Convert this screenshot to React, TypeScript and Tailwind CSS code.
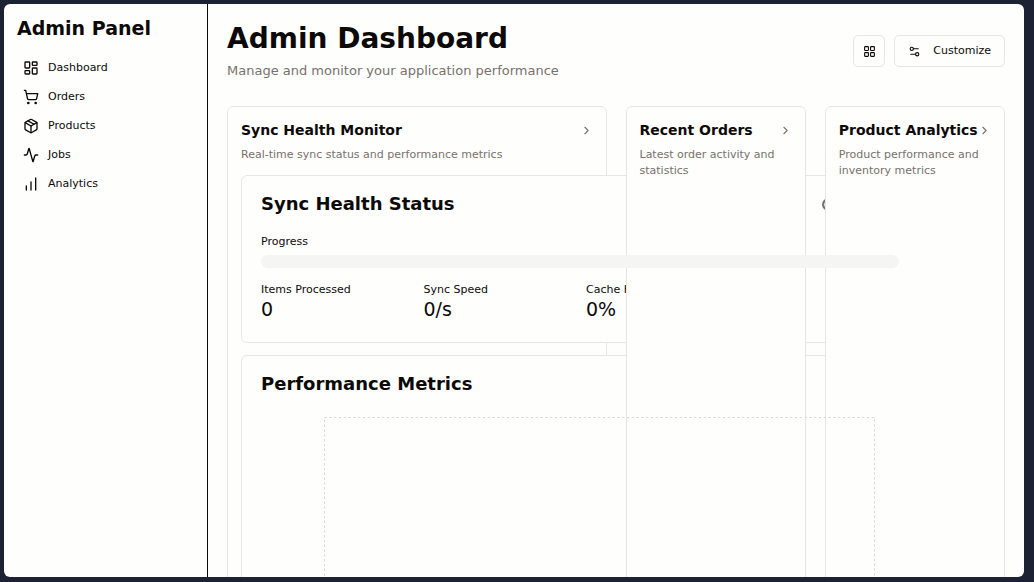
import {
  Activity,
  BarChart,
  ChevronRight,
  Clock,
  LayoutDashboard,
  LayoutGrid,
  Package,
  Settings2,
  ShoppingCart,
} from "lucide-react";
import type { LucideIcon } from "lucide-react";
import type { ReactNode } from "react";

const navItems: { label: string; icon: LucideIcon }[] = [
  { label: "Dashboard", icon: LayoutDashboard },
  { label: "Orders", icon: ShoppingCart },
  { label: "Products", icon: Package },
  { label: "Jobs", icon: Activity },
  { label: "Analytics", icon: BarChart },
];

const stats = [
  { label: "Items Processed", value: "0" },
  { label: "Sync Speed", value: "0/s" },
  { label: "Cache Hit Rate", value: "0%" },
];

function Sidebar() {
  return (
    <aside className="w-[204px] shrink-0 border-r border-[#0c0a09] px-[13px] py-[11px]">
      <h2 className="text-[19px] leading-[26px] font-bold">Admin Panel</h2>
      <nav className="mt-3 flex flex-col">
        {navItems.map(({ label, icon: Icon }) => (
          <a key={label} href="#" className="flex h-[29px] items-center gap-[9px] px-[6px] text-[11px] leading-[19px]">
            <Icon size={16} strokeWidth={2} />
            {label}
          </a>
        ))}
      </nav>
    </aside>
  );
}

function WidgetCard({
  title,
  description,
  wide,
  children,
}: {
  title: string;
  description: string;
  wide?: boolean;
  children?: ReactNode;
}) {
  return (
    <section
      className={`min-w-0 rounded-md border border-[#e7e6e5] bg-[#fefefd] p-[13px] ${wide ? "col-span-2" : ""}`}
    >
      <div className="flex items-center justify-between">
        <h3 className="text-[14px] leading-5 font-bold whitespace-nowrap">{title}</h3>
        <ChevronRight size={13} className="shrink-0 text-[#78716c]" />
      </div>
      <p className="mt-[7px] text-[11px] leading-4 text-[#78716c]">{description}</p>
      {children}
    </section>
  );
}

function SyncStatus() {
  return (
    <div className="mt-3 w-[678px] rounded-md border border-[#e7e6e5] bg-[#fefefd] px-[19px] pt-[15px] pb-[22px]">
      <div className="flex items-center justify-between">
        <h4 className="text-[18px] leading-[26px] font-bold">Sync Health Status</h4>
        <span className="flex w-[77px] items-center gap-1 text-[11px] text-[#78716c]">
          <Clock size={13} strokeWidth={4} />
          Idle
        </span>
      </div>
      <div className="mt-[17px] text-[11px] leading-4">Progress</div>
      <div className="relative mt-[5px] h-[13px] rounded-full bg-[#f5f5f4]" />
      <dl className="mt-[14px] grid grid-cols-4 gap-3">
        {stats.map((s) => (
          <div key={s.label}>
            <dt className="text-[11px] leading-4">{s.label}</dt>
            <dd className="text-[19px] leading-[22px]">{s.value}</dd>
          </div>
        ))}
      </dl>
    </div>
  );
}

function PerformanceMetrics() {
  return (
    <div className="mt-3 w-[678px] rounded-md border border-[#e7e6e5] bg-[#fefefd] px-[19px] pt-[15px] pb-[22px]">
      <h4 className="text-[18px] leading-[26px] font-bold">Performance Metrics</h4>
      <svg className="relative mt-4 h-[240px] w-full" viewBox="0 0 638 240" aria-hidden="true">
        <rect
          x="63.5"
          y="4.5"
          width="550"
          height="230"
          fill="none"
          stroke="#d9d8d7"
          strokeDasharray="2.4 2.4"
        />
      </svg>
    </div>
  );
}

export default function App() {
  return (
    <div className="h-screen overflow-hidden bg-[#1c2133] pt-1 pr-[10px] pb-[5px] pl-1 font-['DejaVu_Sans',sans-serif] text-[#0c0a09]">
      <div className="flex h-full overflow-hidden rounded-md bg-[#fefefd]">
        <Sidebar />
        <main className="min-w-0 flex-1 px-[19px] pt-[15px]">
          <header className="flex items-center justify-between">
            <div>
              <h1 className="text-[28px] leading-10 font-bold">Admin Dashboard</h1>
              <p className="text-[13px] leading-6 text-[#78716c]">
                Manage and monitor your application performance
              </p>
            </div>
            <div className="flex gap-[9px]">
              <button
                aria-label="Grid layout"
                className="flex size-8 items-center justify-center rounded-[5px] border border-[#e7e6e5]"
              >
                <LayoutGrid size={13} />
              </button>
              <button className="flex h-8 items-center gap-3 rounded-[5px] border border-[#e7e6e5] px-[13px] text-[11px]">
                <Settings2 size={13} />
                Customize
              </button>
            </div>
          </header>
          <div className="mt-[23px] grid grid-cols-4 gap-[19px]">
            <WidgetCard title="Sync Health Monitor" description="Real-time sync status and performance metrics" wide>
              <SyncStatus />
              <PerformanceMetrics />
            </WidgetCard>
            <WidgetCard title="Recent Orders" description="Latest order activity and statistics" />
            <WidgetCard title="Product Analytics" description="Product performance and inventory metrics" />
          </div>
        </main>
      </div>
    </div>
  );
}
